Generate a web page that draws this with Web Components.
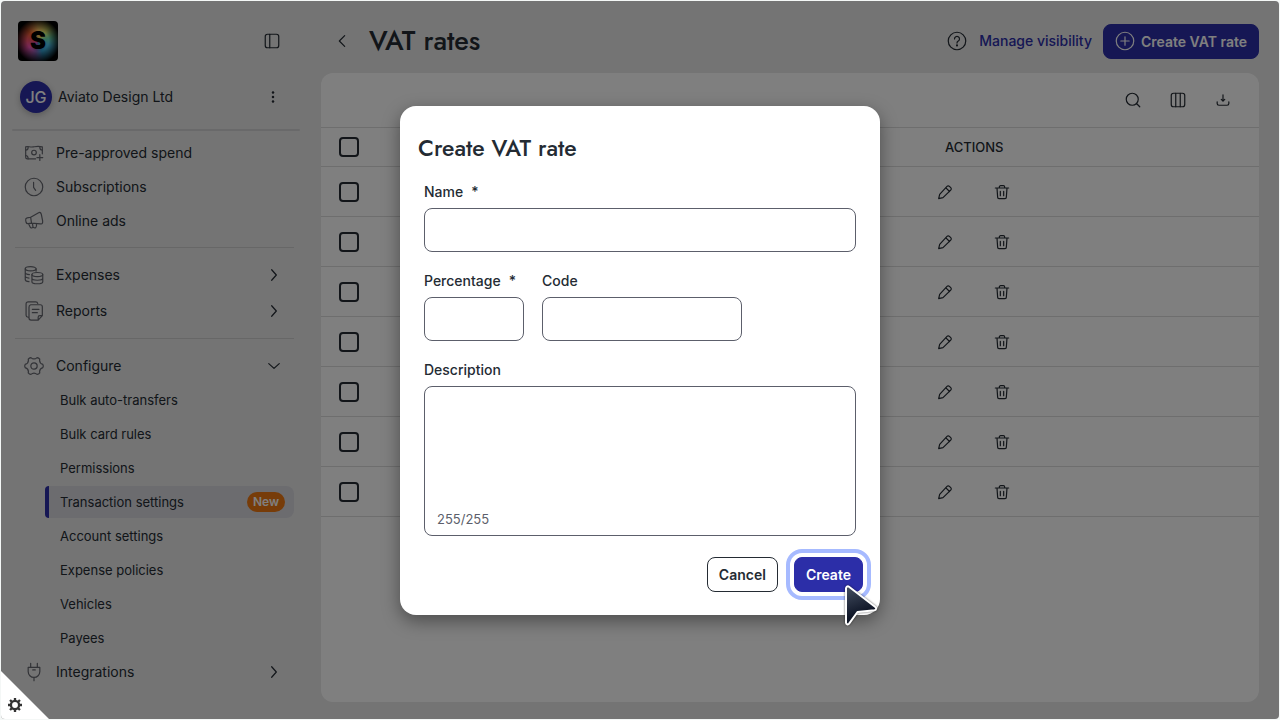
<!DOCTYPE html>
<html lang="en">
<head>
<meta charset="utf-8">
<meta name="viewport" content="width=device-width, initial-scale=1">
<title>VAT rates</title>
<style>
  :root {
    --brand: #2c2ea8;
    --ink: #242b33;
    --muted: #5c5f6b;
    --line: #dcdcdc;
    --heading: Jost, Lato, "Open Sans", sans-serif;
  }

  body {
    margin: 0;
    background: #f4f7f6;
    color: var(--ink);
    font: 400 14px/20px Inter, "Liberation Sans", sans-serif;
  }
</style>
</head>
<body>
<vat-app></vat-app>

<script>
const ICONS = {
  panel: `<rect x="3" y="3" width="18" height="18" rx="3"/><path d="M9 3v18"/>`,
  columns: `<rect x="3" y="3" width="18" height="18" rx="3"/><path d="M9 3v18M15 3v18"/>`,
  kebab: `<g fill="currentColor" stroke="none"><circle cx="12" cy="3" r="2.500"/><circle cx="12" cy="12" r="2.500"/><circle cx="12" cy="21" r="2.500"/></g>`,
  banknote: `<path d="M14 19H4a2 2 0 0 1-2-2V4.500c3-1 5 .8 9 .2s6-1.200 11 0V13"/><circle cx="12" cy="11.500" r="2.800"/><path d="M2 8.500c2 0 3-1 3-3.500M22 8.500c-2 0-3-1-3-3.500M2 15c2 0 3 1 3 4M19 14v7M15.500 17.500h7"/>`,
  clock: `<circle cx="12" cy="12" r="10.500"/><path d="M11.500 6.500v6l2.500 3.500"/>`,
  megaphone: `<path d="M8 7.500 17.500 2c1.600-.8 2.700 0 3.300 2l1.500 7.500c.4 2.500-.3 4.500-2.500 4L9 14.500zM8 7.500 3.800 8.300C2.500 8.600 1.800 9.500 2 11l.5 2.500c.3 1.300 1 1.800 2.500 1.700l4-.7M5.500 15.200l2 4.300c.7 1.500 3.500 1 3.200-.8l-.5-3.500M11 19.500c2.500 1.800 4.500.5 4-3.800"/>`,
  coins: `<ellipse cx="8" cy="4.500" rx="6.500" ry="2.500"/><path d="M1.500 4.500v13c0 1.400 2 2.400 4.500 2.500M1.500 9c0 1.200 2 2.300 5 2.500M1.500 13.300c0 1.200 2 2.300 4.500 2.400M14.500 4.500v3"/><ellipse cx="16" cy="11.500" rx="6.500" ry="2.500"/><path d="M9.500 11.500v8.500c0 1.400 3 2.500 6.500 2.500s6.500-1.100 6.500-2.500v-8.500M9.500 16c0 1.300 3 2.300 6.500 2.300s6.500-1 6.500-2.300"/>`,
  reports: `<path d="M5 19.500c-1.500-.2-2.500-1-2.500-2.500V3.500a2.500 2.500 0 0 1 2.500-2.500h9c1.500 0 2.300.8 2.500 2M8 4.500h11.500A2.500 2.500 0 0 1 22 7v10.500L17 23H8.500A2.500 2.500 0 0 1 6 20.500v-13a3 3 0 0 1 2-3zM22 17.500h-3a2 2 0 0 0-2 2V23M10 10h8M10 14h6"/>`,
  gear: `<path d="M22.600 10.100Q23.600 12 22.600 13.900Q17.900 15.400 18.900 20.300Q17.700 21.900 15.700 22.100Q12 18.800 8.300 22.100Q6.300 21.900 5.100 20.300Q6.100 15.400 1.400 13.900Q.4 12 1.400 10.100Q6.100 8.600 5.100 3.700Q6.300 2.100 8.300 1.900Q12 5.200 15.700 1.900Q17.700 2.100 18.900 3.700Q17.900 8.600 22.600 10.100z"/><circle cx="12" cy="12" r="3.800"/>`,
  plug: `<path d="M8 1.500v5M16 1.500v5M5 6.500h14v5a7 7 0 0 1-14 0zM12 18.500v4M10.500 9.500h3"/>`,
  right: `<path d="m8 3 8 9-8 9"/>`,
  left: `<path d="m16 4-8 8 8 8"/>`,
  down: `<path d="m3 8 9 8 9-8"/>`,
  help: `<circle cx="12" cy="12" r="10.500"/><path d="M9 9.500a3 3 0 1 1 4.500 2.600c-1 .6-1.500 1.200-1.500 2.400"/><circle cx="12" cy="17.300" r=".6" fill="currentColor"/>`,
  plus: `<circle cx="12" cy="12" r="10.500"/><path d="M12 7v10M7 12h10"/>`,
  search: `<circle cx="11" cy="11" r="8"/><path d="m17 17 4 4"/>`,
  download: `<path d="M12 3v11M9 11l3 3 3-3M2 15v3a3 3 0 0 0 3 3h14a3 3 0 0 0 3-3v-3"/>`,
  pencil: `<path d="m4 15.500 11-12a2.500 2.500 0 0 1 3.600 0l2 2a2.500 2.500 0 0 1 0 3.600L9 20.500 2.500 22zM13 5.500l5.800 5.800"/>`,
  trash: `<path d="M2 6h20M8 6V4.500A2 2 0 0 1 10 2.500h4a2 2 0 0 1 2 2V6M4.500 6l1 14a2 2 0 0 0 2 2h9a2 2 0 0 0 2-2l1-14M9.500 11v6.500M14.500 11v6.500"/>`,
  cog: `<circle cx="12" cy="12" r="7" stroke-width="4"/><path stroke-width="4" stroke-linecap="butt" d="M12 0v4M12 20v4M0 12h4M20 12h4M3.500 3.500l3 3M17.500 17.500l3 3M3.500 20.500l3-3M17.500 6.500l3-3"/>`
};

class AppIcon extends HTMLElement {
  constructor() {
    super();
    this.attachShadow({ mode: "open" });
  }

  connectedCallback() {
    const size = this.getAttribute("size") || 20;
    const weight = (this.getAttribute("weight") || 1.2) * 24 / size;
    this.shadowRoot.innerHTML = `
      <style>
        :host { display: inline-flex; flex: none; }
        svg {
          display: block;
          fill: none;
          stroke: currentColor;
          stroke-linecap: round;
          stroke-linejoin: round;
        }
      </style>
      <svg width="${size}" height="${size}" viewBox="0 0 24 24" stroke-width="${weight}" aria-hidden="true">
        ${ICONS[this.getAttribute("name")]}
      </svg>
    `;
  }
}

class IconButton extends HTMLElement {
  constructor() {
    super();
    this.attachShadow({ mode: "open" });
  }

  connectedCallback() {
    this.shadowRoot.innerHTML = `
      <style>
        :host { display: inline-flex; flex: none; }
        button {
          display: flex;
          align-items: center;
          justify-content: center;
          width: 32px;
          height: 32px;
          padding: 0;
          border: 0;
          border-radius: 8px;
          background: none;
          color: inherit;
          cursor: pointer;
        }
        button:hover { background: rgba(0, 0, 0, 0.06); }
      </style>
      <button type="button" aria-label="${this.getAttribute("label")}">
        <app-icon name="${this.getAttribute("icon")}" size="${this.getAttribute("size") || 18}"></app-icon>
      </button>
    `;
  }
}

class AppButton extends HTMLElement {
  constructor() {
    super();
    this.attachShadow({ mode: "open" });
    this.shadowRoot.innerHTML = `
      <style>
        :host { display: inline-flex; flex: none; }
        button {
          display: flex;
          align-items: center;
          gap: 6px;
          height: 35px;
          padding: 0 11px;
          border: 1px solid var(--ink);
          border-radius: 8px;
          background: #fff;
          color: var(--ink);
          font: 600 14px/21px Inter, "Liberation Sans", sans-serif;
          white-space: nowrap;
          cursor: pointer;
        }
        :host([primary]) button {
          border-color: var(--brand);
          background: var(--brand);
          color: #fff;
        }
        :host([highlighted]) button {
          outline: 4px solid #a6baff;
          outline-offset: 4px;
        }
      </style>
      <button type="button"><slot></slot></button>
    `;
  }
}

class NavItem extends HTMLElement {
  constructor() {
    super();
    this.attachShadow({ mode: "open" });
  }

  connectedCallback() {
    const icon = this.getAttribute("icon");
    const arrow = this.getAttribute("arrow");
    this.shadowRoot.innerHTML = `
      <style>
        :host { display: block; }
        a {
          display: flex;
          align-items: center;
          gap: 12px;
          height: 34px;
          padding: 0 10px 0 9px;
          color: inherit;
          text-decoration: none;
        }
        a > app-icon:first-child { color: #65676f; }
        .label { flex: 1; }
        .arrow { padding: 0 3px; }
        :host([arrow]) a { height: 36px; }
        :host([sub]) a {
          height: 32px;
          margin-left: 30px;
          padding: 0 9px 0 11px;
          border-left: 4px solid transparent;
          border-radius: 4px 8px 8px 4px;
          font-size: 13px;
        }
        :host([current]) a {
          border-left-color: var(--brand);
          background: #d8d8df;
        }
      </style>
      <a href="#"${this.hasAttribute("current") ? ` aria-current="page"` : ""}>
        ${icon ? `<app-icon name="${icon}"></app-icon>` : ""}
        <span class="label"><slot></slot></span>
        <slot name="badge"></slot>
        ${arrow ? `<app-icon class="arrow" name="${arrow}" size="14"></app-icon>` : ""}
      </a>
    `;
  }
}

class BrandLogo extends HTMLElement {
  constructor() {
    super();
    this.attachShadow({ mode: "open" });
    this.shadowRoot.innerHTML = `
      <style>
        :host {
          display: flex;
          align-items: center;
          justify-content: center;
          width: 40px;
          height: 40px;
          border-radius: 4px;
          background:
            radial-gradient(circle, transparent 38%, #000 78%),
            conic-gradient(#f8c060, #e8f070 40deg, #70e0b0 75deg, #50c8f0 110deg, #3098c8 160deg, #8060b0 190deg, #f050b0 235deg, #f05070 270deg, #f06030 315deg, #f8c060);
          color: #000;
          font: 900 24px/40px Inter, sans-serif;
        }
      </style>
      <span>S</span>
    `;
  }
}

class SideNav extends HTMLElement {
  constructor() {
    super();
    this.attachShadow({ mode: "open" });
    this.shadowRoot.innerHTML = `
      <style>
        :host {
          display: block;
          box-sizing: border-box;
          width: 320px;
          padding: 20px 27px 0 14px;
        }
        .top, .company {
          display: flex;
          align-items: center;
          justify-content: space-between;
        }
        .top { padding: 0 6px 0 3px; }
        .company {
          gap: 6px;
          margin-top: 20px;
          padding: 0 5px;
        }
        .company strong { flex: 1; font-weight: 400; }
        .avatar {
          width: 32px;
          border-radius: 50%;
          background: var(--brand);
          box-shadow: 0 2px 6px rgba(0, 0, 0, 0.24);
          color: #fff;
          font-size: 16px;
          font-weight: 500;
          line-height: 32px;
          text-align: center;
        }
        hr {
          height: 1px;
          margin: 9px 0;
          border: 0;
          background: #cfcfcf;
        }
        .company + hr {
          height: 2px;
          margin: 16px -6px 5px -3px;
          border-radius: 2px;
          background: #d3d3d5;
        }
        .sub {
          display: flex;
          flex-direction: column;
          gap: 2px;
        }
        .badge {
          padding: 0 6px;
          border-radius: 10px;
          background: #ee7912;
          color: #fff;
          font-size: 12px;
          font-weight: 600;
        }
      </style>
      <div class="top">
        <brand-logo></brand-logo>
        <icon-button icon="panel" label="Toggle sidebar"></icon-button>
      </div>
      <div class="company">
        <span class="avatar">JG</span>
        <strong>Aviato Design Ltd</strong>
        <icon-button icon="kebab" label="Company menu" size="12"></icon-button>
      </div>
      <hr>
      <nav>
        <nav-item icon="banknote">Pre-approved spend</nav-item>
        <nav-item icon="clock">Subscriptions</nav-item>
        <nav-item icon="megaphone">Online ads</nav-item>
        <hr>
        <nav-item icon="coins" arrow="right">Expenses</nav-item>
        <nav-item icon="reports" arrow="right">Reports</nav-item>
        <hr>
        <nav-item icon="gear" arrow="down">Configure</nav-item>
        <div class="sub">
          <nav-item sub>Bulk auto-transfers</nav-item>
          <nav-item sub>Bulk card rules</nav-item>
          <nav-item sub>Permissions</nav-item>
          <nav-item sub current>Transaction settings<span class="badge" slot="badge">New</span></nav-item>
          <nav-item sub>Account settings</nav-item>
          <nav-item sub>Expense policies</nav-item>
          <nav-item sub>Vehicles</nav-item>
          <nav-item sub>Payees</nav-item>
        </div>
        <nav-item icon="plug" arrow="right">Integrations</nav-item>
      </nav>
    `;
  }
}

class PageHeader extends HTMLElement {
  constructor() {
    super();
    this.attachShadow({ mode: "open" });
    this.shadowRoot.innerHTML = `
      <style>
        :host {
          display: flex;
          align-items: center;
          gap: 11px;
          box-sizing: border-box;
          height: 72px;
          padding: 8px 0 0 5px;
        }
        h1 {
          flex: 1;
          margin: 0;
          font: 500 27px/40px var(--heading);
        }
        .links {
          display: flex;
          align-items: center;
          gap: 6px;
        }
        a {
          color: var(--brand);
          font-weight: 500;
          text-decoration: none;
        }
      </style>
      <icon-button icon="left" label="Back" size="16"></icon-button>
      <h1>VAT rates</h1>
      <div class="links">
        <icon-button icon="help" label="Help" size="20"></icon-button>
        <a href="#">Manage visibility</a>
      </div>
      <app-button primary><app-icon name="plus"></app-icon>Create VAT rate</app-button>
    `;
  }
}

class RatesTable extends HTMLElement {
  constructor() {
    super();
    this.attachShadow({ mode: "open" });
    const row = `
      <tr>
        <td><input type="checkbox" aria-label="Select rate"></td>
        <td></td>
        <td>
          <div class="actions">
            <icon-button icon="pencil" label="Edit" size="16"></icon-button>
            <icon-button icon="trash" label="Delete" size="16"></icon-button>
          </div>
        </td>
      </tr>
    `;
    this.shadowRoot.innerHTML = `
      <style>
        :host {
          display: block;
          border-radius: 12px;
          background: #fff;
        }
        .toolbar {
          display: flex;
          align-items: center;
          justify-content: flex-end;
          gap: 13px;
          height: 54px;
          padding: 0 20px;
        }
        table {
          width: 100%;
          border-collapse: separate;
          border-spacing: 0;
          table-layout: fixed;
        }
        th, td {
          box-sizing: border-box;
          height: 50px;
          padding: 0;
          border-bottom: 1px solid var(--line);
          text-align: left;
        }
        th {
          height: 40px;
          border-top: 1px solid var(--line);
          font-size: 13px;
          font-weight: 500;
        }
        th:first-child { width: 56px; }
        th:last-child { width: 330px; padding-left: 16px; }
        td:first-child, th:first-child { padding-left: 18px; }
        input {
          display: block;
          width: 20px;
          height: 20px;
          margin: 0;
          border: 2px solid var(--ink);
          border-radius: 4px;
          appearance: none;
        }
        .actions { display: flex; gap: 25px; }
      </style>
      <div class="toolbar">
        <icon-button icon="search" label="Search"></icon-button>
        <icon-button icon="columns" label="Columns"></icon-button>
        <icon-button icon="download" label="Download" size="14"></icon-button>
      </div>
      <table>
        <thead>
          <tr>
            <th><input type="checkbox" aria-label="Select all rates"></th>
            <th></th>
            <th>ACTIONS</th>
          </tr>
        </thead>
        <tbody>${row.repeat(7)}</tbody>
      </table>
    `;
  }
}

class FormField extends HTMLElement {
  constructor() {
    super();
    this.attachShadow({ mode: "open" });
  }

  connectedCallback() {
    const star = this.hasAttribute("required") ? `<span class="star">*</span>` : "";
    const counter = this.getAttribute("counter");
    this.shadowRoot.innerHTML = `
      <style>
        :host { display: flex; flex-direction: column; gap: 6px; }
        label { font-weight: 500; }
        .star { margin-left: 8px; }
        .box {
          display: flex;
          flex-direction: column;
          border: 1px solid var(--muted);
          border-radius: 8px;
          overflow: hidden;
        }
        input, textarea {
          box-sizing: border-box;
          width: 100%;
          padding: 10px 12px;
          border: 0;
          outline: 0;
          background: none;
          color: inherit;
          font: inherit;
          resize: none;
        }
        input { height: 42px; }
        textarea { height: 122px; }
        .counter {
          padding: 0 12px 6px;
          color: var(--muted);
          font-size: 13px;
        }
      </style>
      <label for="control">${this.getAttribute("label")}${star}</label>
      <div class="box">
        ${counter
          ? `<textarea id="control"></textarea><span class="counter">${counter}</span>`
          : `<input id="control" type="text">`}
      </div>
    `;
  }
}

class PointerArrow extends HTMLElement {
  constructor() {
    super();
    this.attachShadow({ mode: "open" });
    this.shadowRoot.innerHTML = `
      <style>
        :host { display: block; pointer-events: none; }
        svg { display: block; filter: drop-shadow(0 0 1px rgba(0, 0, 0, 0.6)); }
      </style>
      <svg width="34" height="41" viewBox="0 0 34 41">
        <linearGradient id="fill" x1="0" y1="0" x2="0.3" y2="1">
          <stop offset="0" stop-color="#465063"/>
          <stop offset="0.8" stop-color="#0e1526"/>
        </linearGradient>
        <path d="M2 3.500v34c0 1.800 2 2.500 3.100 1.200L13.500 27l17-1.800c1.900-.3 2.200-2.200.8-3.200L5 1.700C3.600.7 2 1.700 2 3.500z" fill="url(#fill)" stroke="#fff" stroke-width="2" stroke-linejoin="round"/>
      </svg>
    `;
  }
}

class RateDialog extends HTMLElement {
  constructor() {
    super();
    this.attachShadow({ mode: "open" });
    this.shadowRoot.innerHTML = `
      <style>
        :host {
          display: block;
          box-sizing: border-box;
          width: 480px;
          max-width: 100%;
          padding: 26px 24px 23px;
          border-radius: 16px;
          background: #fff;
          box-shadow: 0 6px 18px rgba(0, 0, 0, 0.4);
        }
        h2 {
          margin: 0 0 18px -6px;
          font: 500 23px/32px var(--heading);
        }
        form { display: flex; flex-direction: column; gap: 19px; }
        .row { display: flex; gap: 18px; }
        .row form-field:first-child { width: 100px; }
        .row form-field:last-child { width: 200px; }
        footer {
          display: flex;
          justify-content: flex-end;
          gap: 16px;
          margin: 21px -7px 0 0;
        }
        .submit { position: relative; display: flex; }
        pointer-arrow { position: absolute; left: 50px; top: 28px; }
      </style>
      <h2>Create VAT rate</h2>
      <form>
        <form-field label="Name" required></form-field>
        <div class="row">
          <form-field label="Percentage" required></form-field>
          <form-field label="Code"></form-field>
        </div>
        <form-field label="Description" counter="255/255"></form-field>
      </form>
      <footer>
        <app-button>Cancel</app-button>
        <div class="submit">
          <app-button primary highlighted>Create</app-button>
          <pointer-arrow></pointer-arrow>
        </div>
      </footer>
    `;
  }

  connectedCallback() {
    this.setAttribute("role", "dialog");
    this.setAttribute("aria-modal", "true");
    this.setAttribute("aria-label", "Create VAT rate");
  }
}

class SettingsCorner extends HTMLElement {
  constructor() {
    super();
    this.attachShadow({ mode: "open" });
    this.shadowRoot.innerHTML = `
      <style>
        :host { display: block; }
        button {
          display: flex;
          align-items: flex-end;
          width: 48px;
          height: 48px;
          padding: 7px;
          border: 0;
          background: #fff;
          clip-path: polygon(0 0, 100% 100%, 0 100%);
          color: #333;
          cursor: pointer;
        }
      </style>
      <button type="button" aria-label="Settings"><app-icon name="cog" size="14"></app-icon></button>
    `;
  }
}

class VatApp extends HTMLElement {
  constructor() {
    super();
    this.attachShadow({ mode: "open" });
    this.shadowRoot.innerHTML = `
      <style>
        :host {
          display: block;
          box-sizing: border-box;
          min-height: 100vh;
          padding: 1px;
        }
        .shell {
          position: relative;
          display: flex;
          min-height: calc(100vh - 2px);
          border-radius: 4px;
          background: #e8e8e8;
          overflow: hidden;
        }
        side-nav { flex: none; }
        main {
          display: flex;
          flex: 1;
          flex-direction: column;
          padding: 0 20px 17px 0;
        }
        rates-table { flex: 1; }
        .overlay {
          position: absolute;
          inset: 0;
          display: flex;
          align-items: center;
          justify-content: center;
          background: rgba(0, 0, 0, 0.5);
        }
        settings-corner { position: absolute; left: 0; bottom: 0; }
      </style>
      <div class="shell">
        <side-nav></side-nav>
        <main>
          <page-header></page-header>
          <rates-table></rates-table>
        </main>
        <div class="overlay"><rate-dialog></rate-dialog></div>
        <settings-corner></settings-corner>
      </div>
    `;
  }
}

customElements.define("app-icon", AppIcon);
customElements.define("icon-button", IconButton);
customElements.define("app-button", AppButton);
customElements.define("nav-item", NavItem);
customElements.define("brand-logo", BrandLogo);
customElements.define("side-nav", SideNav);
customElements.define("page-header", PageHeader);
customElements.define("rates-table", RatesTable);
customElements.define("form-field", FormField);
customElements.define("pointer-arrow", PointerArrow);
customElements.define("rate-dialog", RateDialog);
customElements.define("settings-corner", SettingsCorner);
customElements.define("vat-app", VatApp);
</script>
</body>
</html>
